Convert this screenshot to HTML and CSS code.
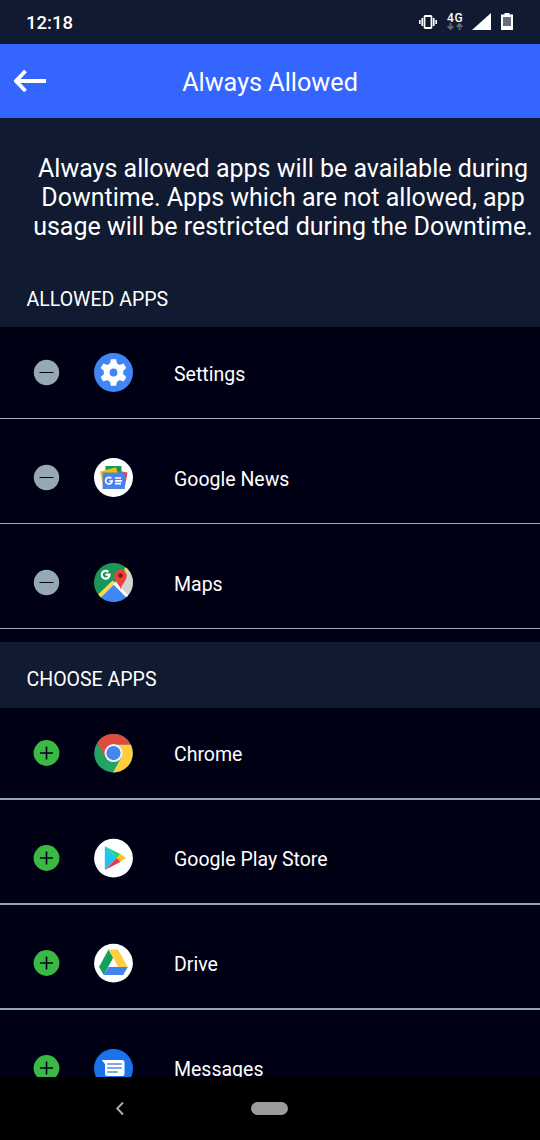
FILE: index.html
```html
<!DOCTYPE html>
<html lang="en">
<head>
<meta charset="utf-8">
<title>Always Allowed</title>
<link rel="stylesheet" href="styles.css">
</head>
<body>
<div class="screen">
  <div class="status-bar">
    <span class="clock">12:18</span>
    <div class="status-icons">
      <svg class="vibrate" width="18" height="14" viewBox="0 0 18 14"><rect x="5.5" y="1" width="7" height="12" rx=".8" fill="none" stroke="#fff" stroke-width="1.8"/><path d="M3.2 3v8M14.8 3v8M.8 5v4M17.2 5v4" stroke="#fff" stroke-width="1.600"/></svg>
      <div class="network"><span class="network-label">4G</span><svg width="16" height="7" viewBox="0 0 16 7"><path d="M3.5 0v6M.7 3.2l2.8 2.8 2.8-2.8M12.5 7V1M9.7 3.8 12.5 1l2.8 2.8" fill="none" stroke="#666b7b" stroke-width="1.8"/></svg></div>
      <svg class="signal" width="19" height="17" viewBox="0 0 19 17"><path d="M19 0v17H0z" fill="#fff"/></svg>
      <svg class="battery" width="12" height="17" viewBox="0 0 12 17"><path d="M3.5 0h5v1.5H12V17H0V1.5h3.500z" fill="#fff"/><path d="M2 4h8v9H2z" fill="#686d7b"/></svg>
    </div>
  </div>
  <header class="app-bar">
    <svg class="back" width="33" height="24" viewBox="0 0 33 24"><path d="M32 12H2.500M11.500 2 2 12l9.500 10" fill="none" stroke="#fff" stroke-width="3.800"/></svg>
    <h1 class="title">Always Allowed</h1>
  </header>
  <main class="content">
    <p class="intro">Always allowed apps will be available during<br>Downtime. Apps which are not allowed, app<br>usage will be restricted during the Downtime.</p>
    <h2 class="section-title">ALLOWED APPS</h2>
    <ul class="app-list">
      <li class="app">
        <svg class="toggle" viewBox="0 0 26 26"><circle cx="13.500" cy="12.500" r="12.700" fill="#96a9b2"/><path d="M6.500 12.500h14" stroke="#000014" stroke-width="1"/></svg>
        <svg class="icon" viewBox="0 0 39 39"><circle cx="19.500" cy="19.500" r="19.500" fill="#4285f4"/><g fill="#fff"><circle cx="19.500" cy="19.500" r="9.800"/><path id="tooth" d="M15.700 12 16.900 6.200h5.200l1.200 5.800z"/><use href="#tooth" transform="rotate(60 19.500 19.500)"/><use href="#tooth" transform="rotate(120 19.500 19.500)"/><use href="#tooth" transform="rotate(180 19.500 19.500)"/><use href="#tooth" transform="rotate(240 19.500 19.500)"/><use href="#tooth" transform="rotate(300 19.500 19.500)"/></g><circle cx="19.500" cy="19.500" r="3.900" fill="#4285f4"/></svg>
        <span class="name">Settings</span>
      </li>
      <li class="app">
        <svg class="toggle" viewBox="0 0 26 26"><circle cx="13.500" cy="12.500" r="12.700" fill="#96a9b2"/><path d="M6.500 12.500h14" stroke="#000014" stroke-width="1"/></svg>
        <svg class="icon" viewBox="0 0 39 39"><circle cx="19.500" cy="19.500" r="19.500" fill="#fff"/><path d="M11.500 8h16v8h-16z" fill="#0f9d58"/><path d="m25 13 8.500 1.500L31 28h-6z" fill="#ea4335"/><path d="m6 13.500 16-4.300 3 10-16 8z" fill="#fbbc04"/><path d="M8.600 14.500h22.300V31H8.600z" fill="#4c82ea"/><path d="M17.300 20.400A3.300 3.300 0 1 0 18.200 23h-3M21 20h6M21 22.800h7M21 25.600h6" fill="none" stroke="#fff" stroke-width="1.700"/></svg>
        <span class="name">Google News</span>
      </li>
      <li class="app">
        <svg class="toggle" viewBox="0 0 26 26"><circle cx="13.500" cy="12.500" r="12.700" fill="#96a9b2"/><path d="M6.500 12.500h14" stroke="#000014" stroke-width="1"/></svg>
        <svg class="icon" viewBox="0 0 39 39"><clipPath id="map-clip"><circle cx="19.500" cy="19.500" r="19.500"/></clipPath><g clip-path="url(#map-clip)"><path d="M0 0h39v39H0z" fill="#19975a"/><path d="m19.500 21 13-16H39v34z" fill="#d1d3d5"/><path d="M0 39 20 19l20 20z" fill="#4285f4"/><path d="m4 34.500 16-15.600" stroke="#fdd84b" stroke-width="4"/><path d="m20 20 15 15" stroke="#fff" stroke-width="3"/><path d="m31 5 3.500 3" stroke="#fdd84b" stroke-width="3"/></g><path d="M14.300 8.900a3.900 3.900 0 1 0 1.200 2.800h-4" fill="none" stroke="#fff" stroke-width="2.200"/><path d="M26.500 26.500c-.7-5.300-6.200-8-6.200-13.700a6.200 6.200 0 0 1 12.400 0c0 5.700-5.500 8.400-6.200 13.700z" fill="#ea4335"/><circle cx="26.500" cy="12.500" r="2.300" fill="#761b19"/></svg>
        <span class="name">Maps</span>
      </li>
    </ul>
    <h2 class="section-title choose">CHOOSE APPS</h2>
    <ul class="app-list available">
      <li class="app">
        <svg class="toggle" viewBox="0 0 26 26"><circle cx="13.500" cy="13" r="12.900" fill="#3ab944"/><path d="M7 13h13M13.500 6.500v13" stroke="#000014" stroke-width="1.600"/></svg>
        <svg class="icon" viewBox="0 0 39 39"><clipPath id="chrome-clip"><circle cx="19.500" cy="19.200" r="19.300"/></clipPath><g clip-path="url(#chrome-clip)"><path d="M0 0h39v39H0z" fill="#21a464"/><path d="M3.500 9.500 0 0h39v10.700H19.500l-7.600 13.200z" fill="#dd4c40"/><path d="M19.500 10.700H39V39H18.700l8.400-15.200z" fill="#ffcd40"/></g><circle cx="19.500" cy="19.100" r="9" fill="#f5f5f5"/><circle cx="19.500" cy="19.100" r="7.100" fill="#4587ed"/></svg>
        <span class="name">Chrome</span>
      </li>
      <li class="app">
        <svg class="toggle" viewBox="0 0 26 26"><circle cx="13.500" cy="13" r="12.900" fill="#3ab944"/><path d="M7 13h13M13.500 6.500v13" stroke="#000014" stroke-width="1.600"/></svg>
        <svg class="icon" viewBox="0 0 39 39"><circle cx="19.500" cy="19.200" r="19.400" fill="#fff"/><path d="m10.800 7.200 12 11.800-12 12z" fill="#20c5ef"/><path d="m10.800 7.200 16 8-4 4z" fill="#25d47d"/><path d="m26 14.800 6 4.200-6 4-3.200-4z" fill="#fbc51d"/><path d="m22.800 19 3.500 4-15.500 8z" fill="#dc3b52"/></svg>
        <span class="name">Google Play Store</span>
      </li>
      <li class="app">
        <svg class="toggle" viewBox="0 0 26 26"><circle cx="13.500" cy="13" r="12.900" fill="#3ab944"/><path d="M7 13h13M13.500 6.500v13" stroke="#000014" stroke-width="1.600"/></svg>
        <svg class="icon" viewBox="0 0 39 39"><circle cx="19.500" cy="19.200" r="19.400" fill="#fff"/><path d="m14.500 5.500 4.700 8.300L9.800 31 5 23z" fill="#14a05d"/><path d="M14.500 5.500H24L33.800 23h-9.500z" fill="#ffcf42"/><path d="M14.500 23h19.300L29.200 31H9.800z" fill="#4383f0"/></svg>
        <span class="name">Drive</span>
      </li>
      <li class="app">
        <svg class="toggle" viewBox="0 0 26 26"><circle cx="13.500" cy="13" r="12.900" fill="#3ab944"/><path d="M7 13h13M13.500 6.500v13" stroke="#000014" stroke-width="1.600"/></svg>
        <svg class="icon" viewBox="0 0 39 39"><circle cx="19.500" cy="19.500" r="19.500" fill="#1a73e8"/><path d="M7.700 11H28a2.500 2.500 0 0 1 2.500 2.500v11A2.500 2.500 0 0 1 28 27H13.500a2.500 2.500 0 0 1-2.500-2.500V15z" fill="#fff"/><path d="M14 15h13M14 19h13M14 23h9" stroke="#82a9e5" stroke-width="2" stroke-linecap="round"/></svg>
        <span class="name">Messages</span>
      </li>
    </ul>
  </main>
  <nav class="nav-bar">
    <svg class="nav-back" width="9" height="14" viewBox="0 0 9 14"><path d="M8 .5 2.200 6.500 8 12.500" fill="none" stroke="#b0b0b0" stroke-width="1.900"/></svg>
    <span class="home"></span>
  </nav>
</div>
</body>
</html>
```
FILE: styles.css
```css
* { box-sizing: border-box; }
body { margin: 0; background: #000; }
.screen {
  display: flex;
  flex-direction: column;
  width: 540px;
  height: 1140px;
  overflow: hidden;
  background: #101a31;
  color: #fff;
  font-family: Roboto, sans-serif;
}
.status-bar {
  display: flex;
  flex: none;
  justify-content: space-between;
  height: 44px;
  padding: 0 27px 0 26px;
}
.clock { font-size: 18.500px; font-weight: 500; line-height: 46px; }
.status-icons { display: flex; align-items: flex-start; padding-top: 13px; }
.vibrate { margin: 2px 10px 0 0; }
.network { display: flex; flex-direction: column; width: 17px; }
.network-label { font-size: 12px; font-weight: 500; line-height: 10px; letter-spacing: .8px; }
.signal { margin-left: 8px; }
.battery { margin-left: 10px; }
.app-bar {
  display: grid;
  flex: none;
  grid-template-columns: 33px 1fr 33px;
  align-items: center;
  height: 74px;
  padding: 0 14px;
  background: #3466ff;
}
.title { margin: 4px 0 0; font-size: 25.200px; font-weight: 400; line-height: 30px; text-align: center; }
.content { flex: 1; min-height: 0; overflow: hidden; }
.intro {
  height: 152px;
  margin: 0;
  padding: 36px 0 0 26px;
  font-size: 25px;
  line-height: 29px;
  text-align: center;
  white-space: nowrap;
}
.section-title {
  height: 57px;
  margin: 0;
  padding: 18px 26px 0 26.500px;
  font-size: 19.550px;
  font-weight: 400;
  line-height: 24px;
}
.choose { height: 66px; padding-top: 26px; }
.app-list {
  display: flex;
  flex-direction: column;
  gap: 13px;
  margin: 0;
  padding: 0 0 13px;
  background: #000014;
  list-style: none;
}
.app {
  display: flex;
  align-items: center;
  height: 92px;
  padding-left: 33px;
  border-bottom: 1px solid #a5abb6;
}
.available .app { border-bottom: 2px solid #92a5b5; }
.toggle { width: 26px; height: 26px; overflow: visible; }
.icon { width: 39px; height: 39px; margin: 0 41px 0 35px; overflow: visible; }
.name { padding-top: 4px; font-size: 19.500px; line-height: 24px; }
.nav-bar {
  display: flex;
  flex: none;
  align-items: center;
  height: 63px;
  padding-left: 115px;
  background: #000;
}
.home { width: 37px; height: 13px; margin-left: 127px; border-radius: 7px; background: #9c9c9c; }
```
